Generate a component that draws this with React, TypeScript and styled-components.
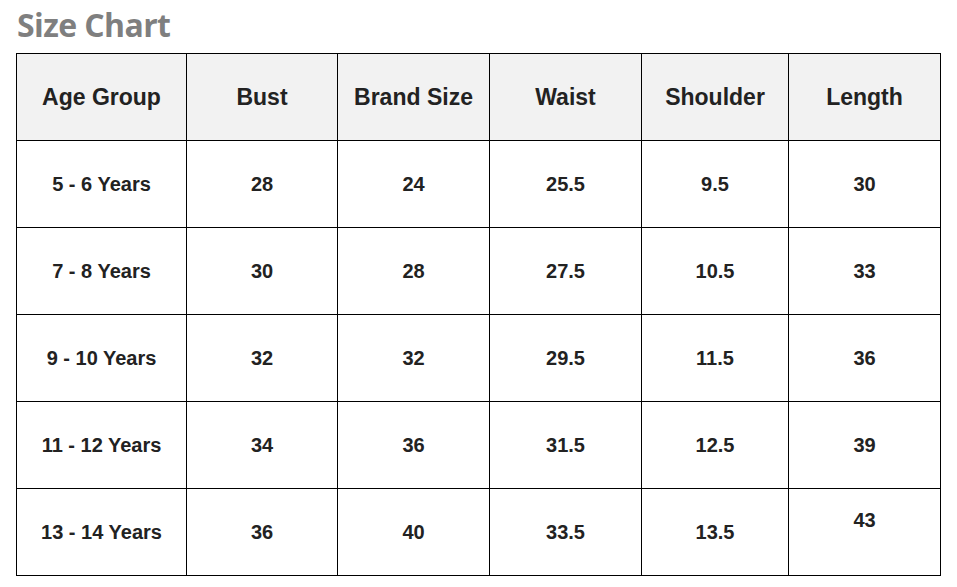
import * as React from "react";
import styled, { createGlobalStyle } from "styled-components";

const GlobalStyle = createGlobalStyle`
  html, body {
    margin: 0;
    padding: 0;
    background: #fff;
  }
`;

const columns = ["Age Group", "Bust", "Brand Size", "Waist", "Shoulder", "Length"];
const widths = [170, 151, 152, 152, 147, 152];

const rows = [
  ["5 - 6 Years", "28", "24", "25.5", "9.5", "30"],
  ["7 - 8 Years", "30", "28", "27.5", "10.5", "33"],
  ["9 - 10 Years", "32", "32", "29.5", "11.5", "36"],
  ["11 - 12 Years", "34", "36", "31.5", "12.5", "39"],
  ["13 - 14 Years", "36", "40", "33.5", "13.5", "43"],
];

const App: React.FC = () => {
  return (
    <Page>
      <GlobalStyle />
      <Title>Size Chart</Title>
      <Table>
        <colgroup>
          {widths.map((w, i) => (
            <col key={i} style={{ width: w }} />
          ))}
        </colgroup>
        <thead>
          <tr>
            {columns.map((c) => (
              <HeadCell key={c}>{c}</HeadCell>
            ))}
          </tr>
        </thead>
        <tbody>
          {rows.map((r, ri) => (
            <tr key={ri}>
              {r.map((v, ci) => (
                <Cell key={ci} $raised={ri === rows.length - 1 && ci === r.length - 1}>
                  {v}
                </Cell>
              ))}
            </tr>
          ))}
        </tbody>
      </Table>
    </Page>
  );
};

const Page = styled.div`
  padding: 5px 0 0 16px;
`;

const Title = styled.h2`
  margin: 0 0 8px 1px;
  font-family: "Open Sans", sans-serif;
  font-weight: 700;
  font-size: 32px;
  line-height: 40px;
  color: #7f7f7f;
  letter-spacing: -0.6px;
`;

const Table = styled.table`
  border-collapse: collapse;
  table-layout: fixed;
  width: 925px;
  font-family: "Liberation Sans", Arial, sans-serif;
  color: #222;
`;

const HeadCell = styled.th`
  height: 86px;
  padding: 0;
  border: 1px solid #000;
  background: #f2f2f2;
  font-size: 23px;
  font-weight: 700;
  text-align: center;
  vertical-align: middle;
`;

const Cell = styled.td<{ $raised?: boolean }>`
  height: ${(p) => (p.$raised ? "60px" : "85px")};
  padding: 1px 0 ${(p) => (p.$raised ? "25px" : "0")};
  border: 1px solid #000;
  font-size: 20px;
  font-weight: 700;
  text-align: center;
  vertical-align: middle;
`;

export default App;
